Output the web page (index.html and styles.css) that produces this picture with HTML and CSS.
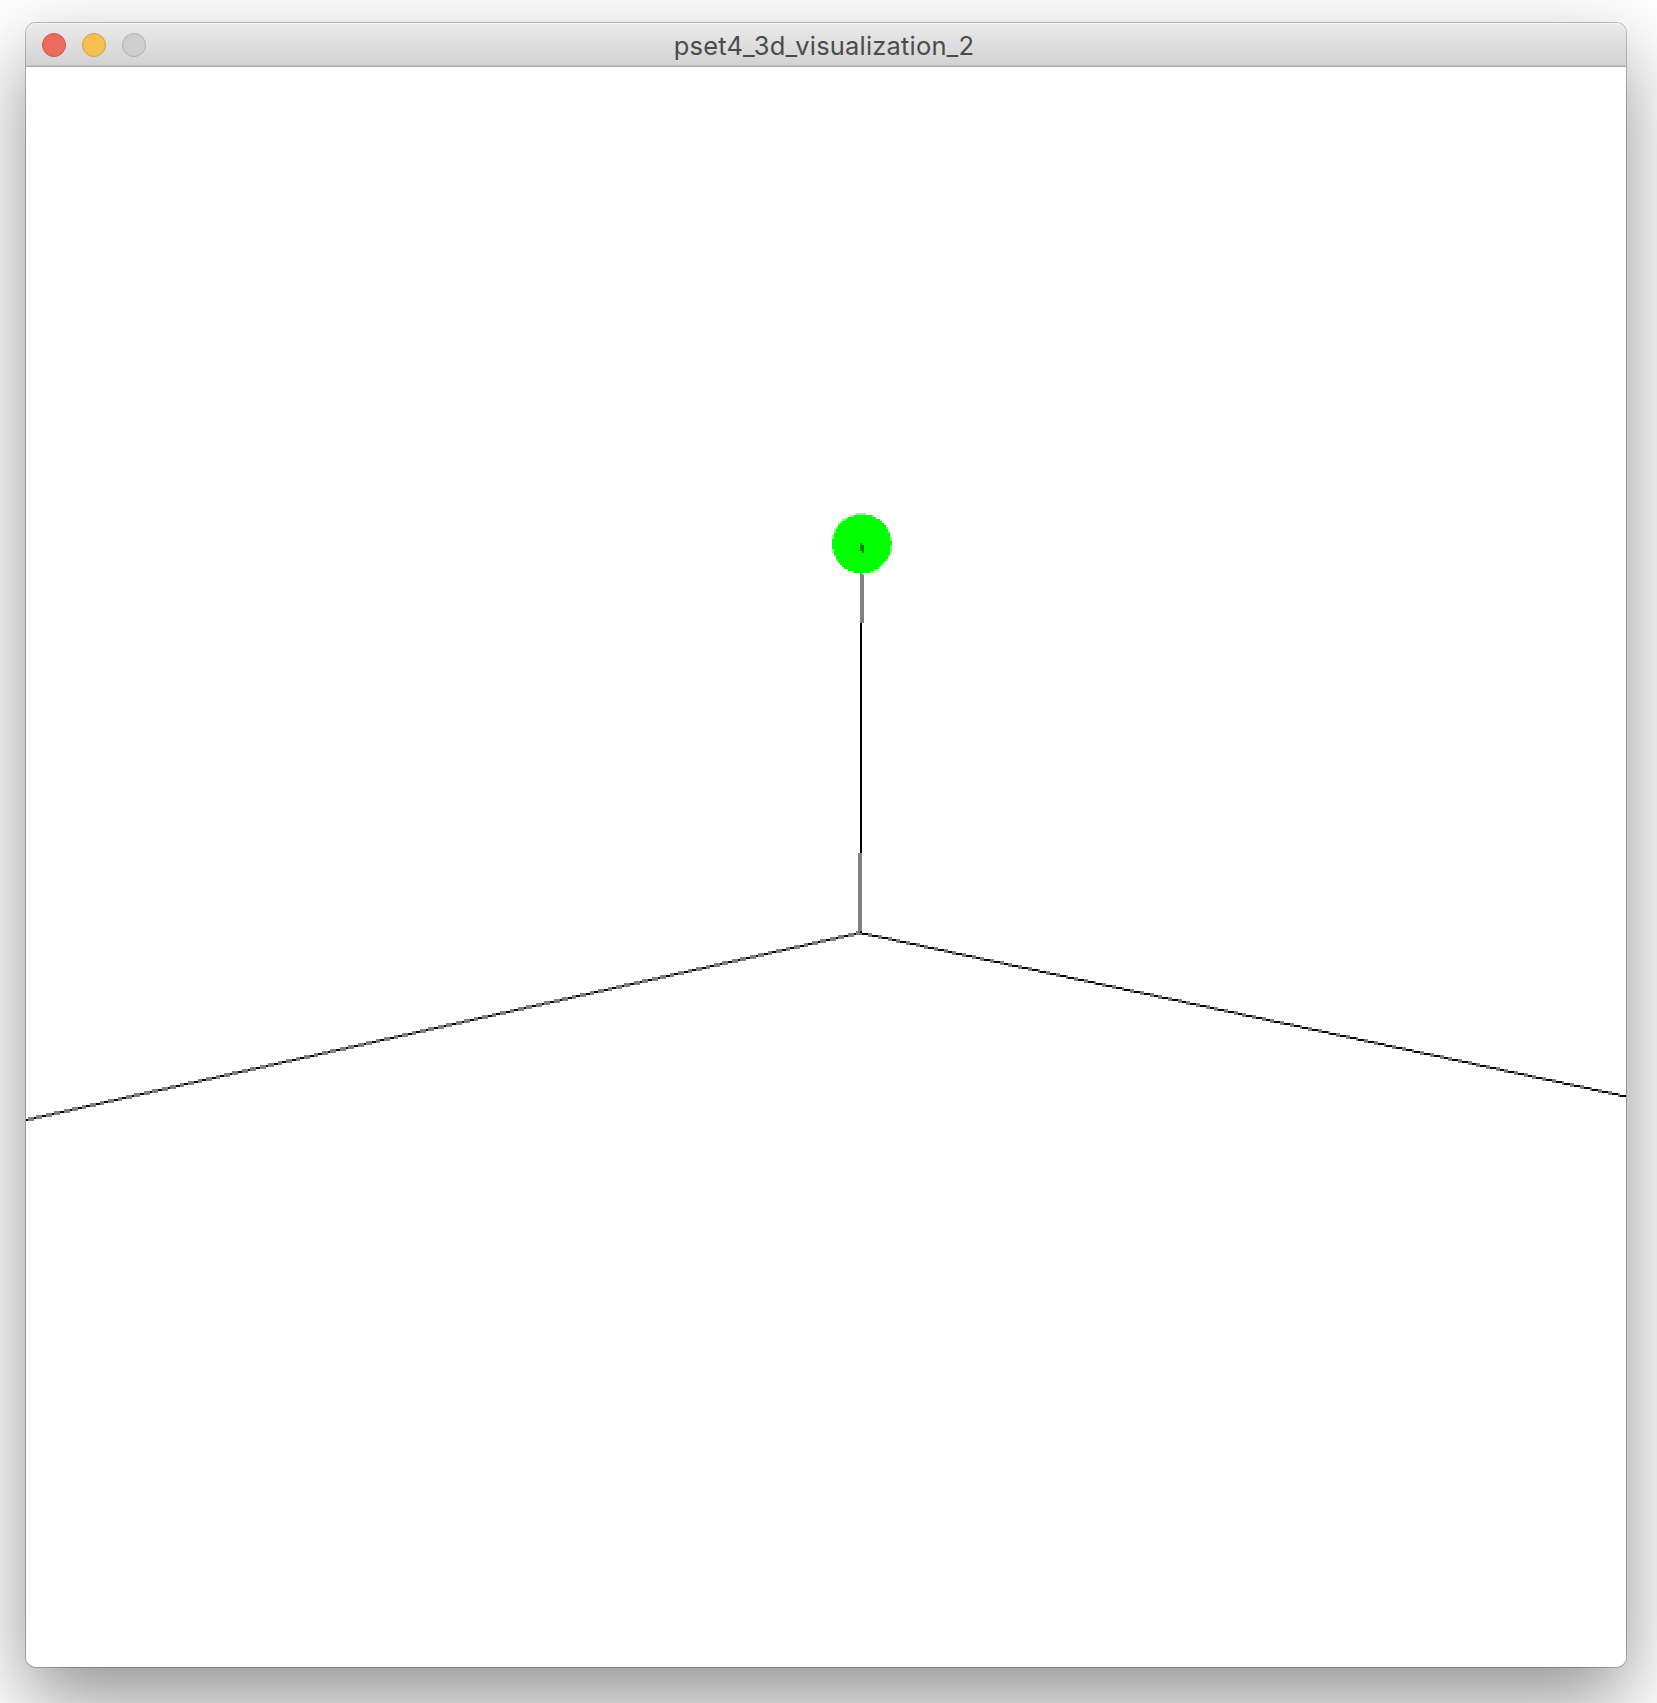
FILE: index.html
```
<!DOCTYPE html>
<html lang="en">
<head>
<meta charset="utf-8">
<title>pset4_3d_visualization_2</title>
<link rel="stylesheet" href="styles.css">
</head>
<body>
<main class="window">
  <header class="titlebar">
    <div class="controls">
      <span class="control close"></span>
      <span class="control minimize"></span>
      <span class="control disabled"></span>
    </div>
    <h1 class="title">pset4_3d_visualization_2</h1>
  </header>
  <canvas class="viewport" id="scene" width="800" height="800"></canvas>
</main>
<script src="scene.js"></script>
</body>
</html>
```
FILE: styles.css
```
* { box-sizing: border-box; }
html, body { height: 100%; }
body {
  margin: 0;
  padding: 23px 0 0 26px;
  background: #fff;
  overflow: hidden;
}
.window {
  width: 1600px;
  height: 1644px;
  display: flex;
  flex-direction: column;
  border-radius: 10px;
  background: #fff;
  box-shadow: 0 0 0 1px rgba(0, 0, 0, .24), 0 33px 80px rgba(0, 0, 0, .43);
}
.titlebar {
  height: 44px;
  flex: none;
  display: grid;
  grid-template-columns: 132px 1fr 136px;
  align-items: center;
  padding: 2px 16px 0;
  border-radius: 10px 10px 0 0;
  border-bottom: 1px solid #a9a9a9;
  background: linear-gradient(#ebebeb, #d2d2d2);
  box-shadow: inset 0 1px #f5f5f5, inset 0 -1px #c2c2c2;
}
.controls { display: flex; gap: 16px; padding-bottom: 1px; }
.control {
  width: 24px;
  height: 24px;
  border-radius: 50%;
  border: 1px solid;
}
.close { background: #ed6a5e; border-color: #d5554a; }
.minimize { background: #f5bf4f; border-color: #d8a03b; }
.disabled { background: #cecece; border-color: #b0b0b0; }
.title {
  margin: 0;
  padding-top: 1px;
  text-align: center;
  font: 400 25.5px/30px Inter, "Liberation Sans", sans-serif;
  letter-spacing: .18px;
  color: #4b4b4b;
  white-space: nowrap;
}
.viewport {
  width: 1600px;
  height: 1600px;
  display: block;
  border-radius: 0 0 10px 10px;
  image-rendering: pixelated;
}
```
FILE: scene.js
```
const ctx = document.getElementById('scene').getContext('2d');
const W = 800, H = 800;
const SAMPLES = [0.25, 0.75];
const origin = { x: 417.1, y: 432.9 };

// Two-sample antialiasing: each sample contributes half of the pixel.
const image = ctx.createImageData(W, H);
const buffer = SAMPLES.map(() => new Uint8Array(W * H));
const LINE = 1, BALL = 2;

SAMPLES.forEach((s, k) => {
  const put = (x, y, v) => { buffer[k][y * W + x] = v; };

  for (let x = 0; x < W; x++) {
    const sx = x + s;
    const y = sx < origin.x
      ? 526.53 - sx * (526.53 - origin.y) / origin.x
      : origin.y + (sx - origin.x) * (514 - origin.y) / (796.5 - origin.x);
    put(x, Math.floor(y - s + 0.5), LINE);
  }
  for (let y = 238; y < 433; y++) {
    const ax = 417.25 + (392.5 - y) * 0.5 / 115;
    put(Math.floor(ax - s + 0.5), y, LINE);
  }
  for (let y = 220; y < 256; y++) {
    for (let x = 400; x < 436; x++) {
      if (Math.hypot(x + s - 417.95, y + s - 238.4) < 14.86) put(x, y, BALL);
    }
  }
});

const colors = [[255, 255, 255], [0, 0, 0], [0, 255, 0]];
for (let i = 0; i < W * H; i++) {
  const a = colors[buffer[0][i]], b = colors[buffer[1][i]];
  for (let c = 0; c < 3; c++) image.data[i * 4 + c] = (a[c] + b[c]) / 2;
  image.data[i * 4 + 3] = 255;
}
ctx.putImageData(image, 0, 0);

// Tip of the vertical axis showing through the ball.
ctx.fillStyle = '#008000';
ctx.fillRect(417, 238, 1, 4);
ctx.fillRect(418, 239, 1, 4);
```
